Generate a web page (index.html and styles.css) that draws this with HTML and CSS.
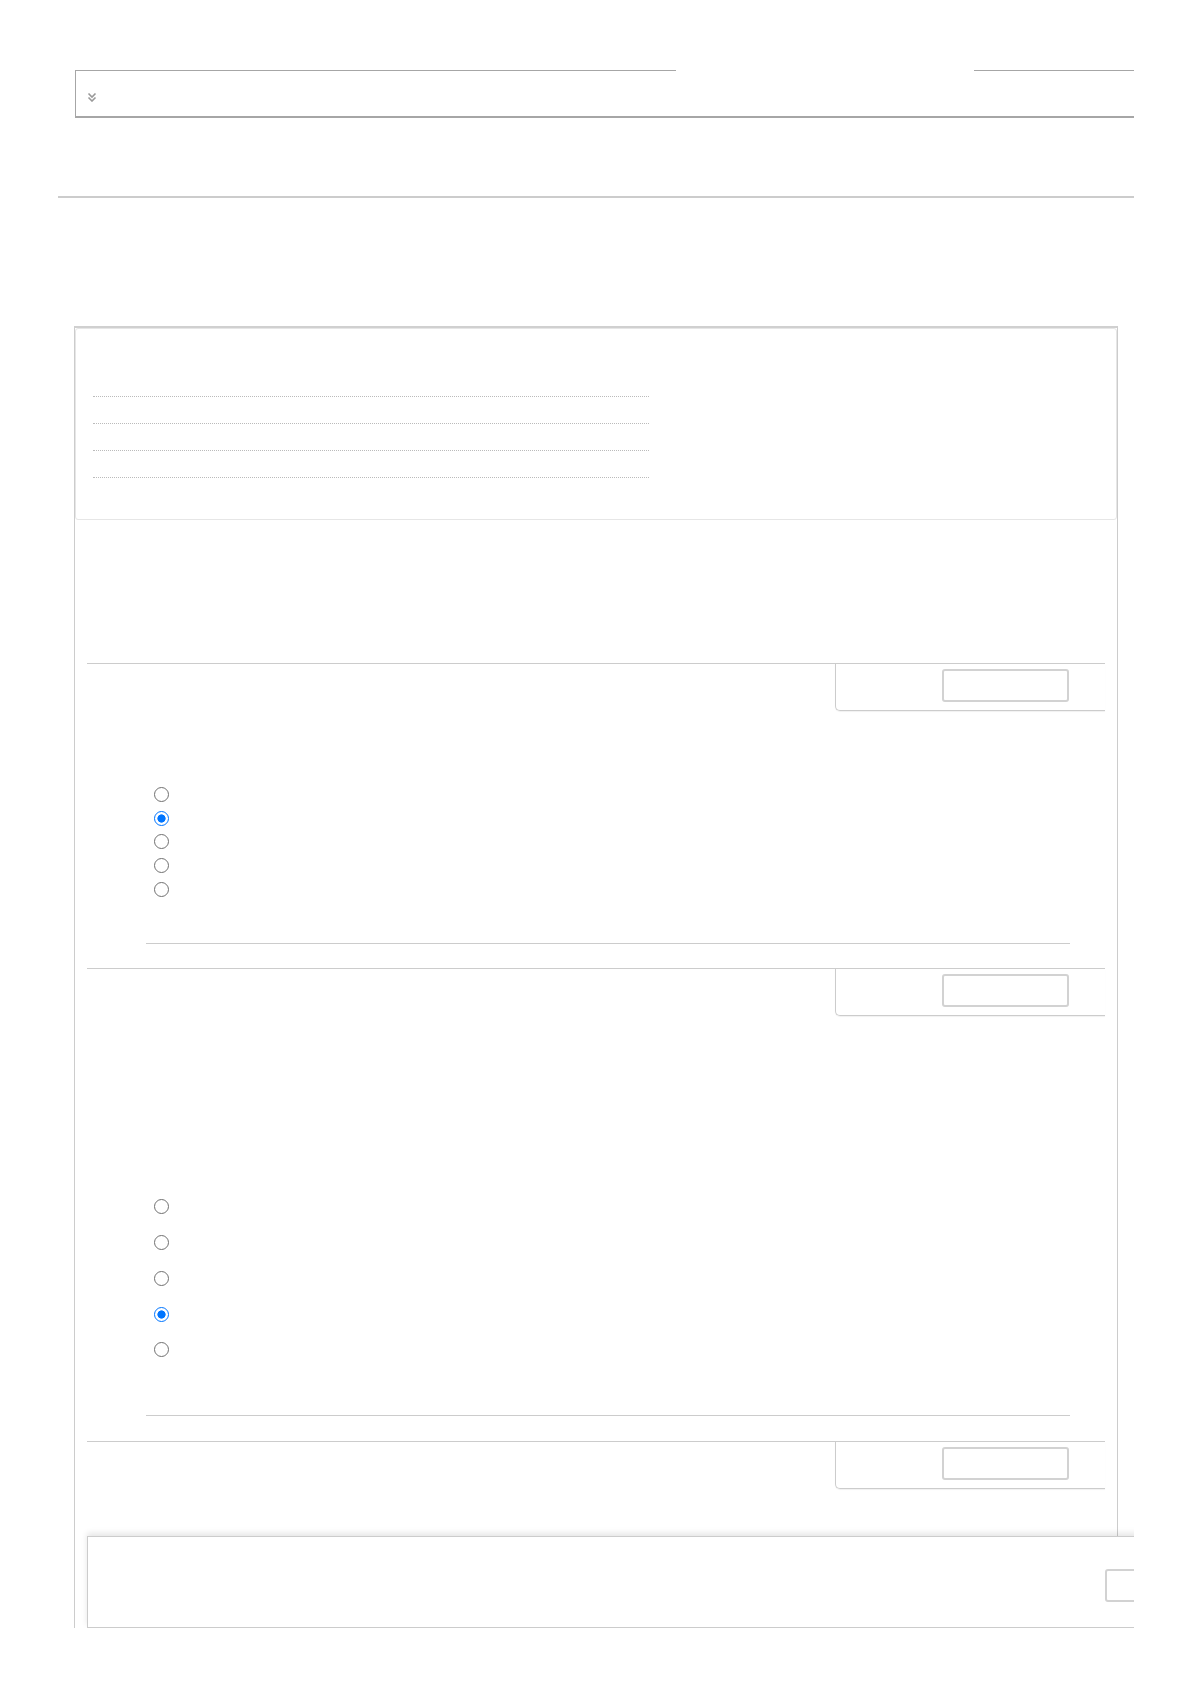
FILE: index.html
```html
<!DOCTYPE html>
<html lang="en">
<head>
    <meta charset="UTF-8">
    <meta name="viewport" content="width=device-width, initial-scale=1.0">
    <title>Quiz</title>
    <link rel="stylesheet" href="styles.css">
</head>
<body>
    <div class="page">
        <div class="filter">
            <div class="filter-edge">
                <span class="edge-left"></span>
                <span class="edge-gap"></span>
                <span class="edge-right"></span>
            </div>
            <div class="filter-body">
                <svg class="chevron" width="10" height="10" viewBox="0 0 10 10">
                    <path d="M1.5 1.5 5 5l3.5-3.5M1.5 5.5 5 9l3.5-3.5" fill="none" stroke="#999" stroke-width="1.6"/>
                </svg>
            </div>
        </div>

        <div class="rule"></div>

        <div class="panel">
            <div class="panel-head">
                <div class="meta-row"></div>
                <div class="meta-row"></div>
                <div class="meta-row"></div>
                <div class="meta-row"></div>
            </div>

            <div class="intro"></div>

            <div class="question q-first">
                <div class="q-head">
                    <div class="mark"><input class="mark-input" type="text"></div>
                </div>
                <div class="q-text"></div>
                <ul class="answers">
                    <li class="answer"><input type="radio" name="q1"></li>
                    <li class="answer"><input type="radio" name="q1" checked></li>
                    <li class="answer"><input type="radio" name="q1"></li>
                    <li class="answer"><input type="radio" name="q1"></li>
                    <li class="answer"><input type="radio" name="q1"></li>
                </ul>
                <div class="q-sep"></div>
            </div>

            <div class="question q-long">
                <div class="q-head">
                    <div class="mark"><input class="mark-input" type="text"></div>
                </div>
                <div class="q-text"></div>
                <ul class="answers">
                    <li class="answer"><input type="radio" name="q2"></li>
                    <li class="answer"><input type="radio" name="q2"></li>
                    <li class="answer"><input type="radio" name="q2"></li>
                    <li class="answer"><input type="radio" name="q2" checked></li>
                    <li class="answer"><input type="radio" name="q2"></li>
                </ul>
                <div class="q-sep"></div>
            </div>

            <div class="question q-last">
                <div class="q-head">
                    <div class="mark"><input class="mark-input" type="text"></div>
                </div>
                <div class="q-text"></div>
            </div>
        </div>

        <div class="submit-bar">
            <button class="bar-btn" type="button"></button>
        </div>
    </div>
</body>
</html>
```

FILE: styles.css
```css
body {
    margin: 0;
    background: #fff;
    font-family: "Liberation Sans", Arial, sans-serif;
    font-size: 14px;
}
.page {
    position: relative;
    width: 1134px;
    height: 1628px;
    padding-left: 58px;
    box-sizing: border-box;
    overflow: hidden;
}

/* collapsed filter box */
.filter {
    margin: 70px 0 0 17px;
    width: 1100px;
    border-left: 1px solid #a6a6a6;
    border-bottom: 2px solid #a6a6a6;
}
.filter-edge {
    display: flex;
    margin-left: -1px;
}
.edge-left {
    width: 601px;
    border-top: 1px solid #a6a6a6;
}
.edge-gap {
    width: 298px;
}
.edge-right {
    flex: 1;
    border-top: 1px solid #a6a6a6;
}
.filter-body {
    padding: 21px 11px 14px;
}
.chevron {
    display: block;
}

.rule {
    margin-top: 78px;
    height: 2px;
    background: #ccc;
}

/* quiz panel */
.panel {
    margin: 128px 0 0 16px;
    width: 1042px;
    border: 1px solid #ccc;
    border-top: 2px solid #d0d0d0;
    border-bottom: none;
}
.panel-head {
    border: 1px solid #e6e6e6;
    border-radius: 3px;
    padding: 41px 17px;
}
.meta-row {
    width: 556px;
    height: 26px;
    border-bottom: 1px dotted #bbb;
}
.intro {
    height: 143px;
}

.question {
    margin: 0 12px;
    border-top: 1px solid #ccc;
}
.q-head {
    display: flex;
    justify-content: flex-end;
}
.mark {
    width: 270px;
    box-sizing: border-box;
    padding: 5px 0 8px 106px;
    border-left: 1px solid #ccc;
    border-bottom: 1px solid #ccc;
    border-bottom-left-radius: 5px;
    box-shadow: 0 1px 1px rgba(0, 0, 0, 0.06);
}
.mark-input {
    display: block;
    width: 127px;
    height: 33px;
    box-sizing: border-box;
    padding: 0;
    border: 2px solid #d2d2d2;
    border-radius: 3px;
    background: #fff;
}
.answers {
    list-style: none;
    margin: 0;
    padding: 0 0 0 67px;
}
.answer {
    display: flex;
    align-items: center;
    height: 23.7px;
}
.answer input {
    appearance: none;
    -webkit-appearance: none;
    width: 15px;
    height: 15px;
    margin: 0;
    box-sizing: border-box;
    border: 1.8px solid #707070;
    border-radius: 50%;
    background: #fff;
}
.answer input:checked {
    border-color: #0075ff;
    background: radial-gradient(circle, #0075ff 0 3.8px, #fff 4.4px);
}
.q-sep {
    margin: 42px 35px 23.7px 59px;
    border-top: 1px solid #ccc;
}

.q-first .q-text {
    height: 71.5px;
}
.q-long .q-text {
    height: 173.4px;
}
.q-long .answer {
    height: 35.75px;
}
.q-long .q-sep {
    margin-top: 47.6px;
    margin-bottom: 24.5px;
}
.q-last .q-text {
    height: 200px;
}

/* sticky submit bar */
.submit-bar {
    position: absolute;
    left: 87px;
    bottom: 0;
    width: 1182px;
    height: 92px;
    box-sizing: border-box;
    display: flex;
    justify-content: flex-end;
    align-items: flex-start;
    padding: 32px 36px 0 0;
    background: #fff;
    border: 1px solid #ccc;
    box-shadow: 0 -3px 6px rgba(0, 0, 0, 0.1);
}
.bar-btn {
    width: 127px;
    height: 33px;
    padding: 0;
    border: 2px solid #d2d2d2;
    border-radius: 3px;
    background: #fff;
}
```
